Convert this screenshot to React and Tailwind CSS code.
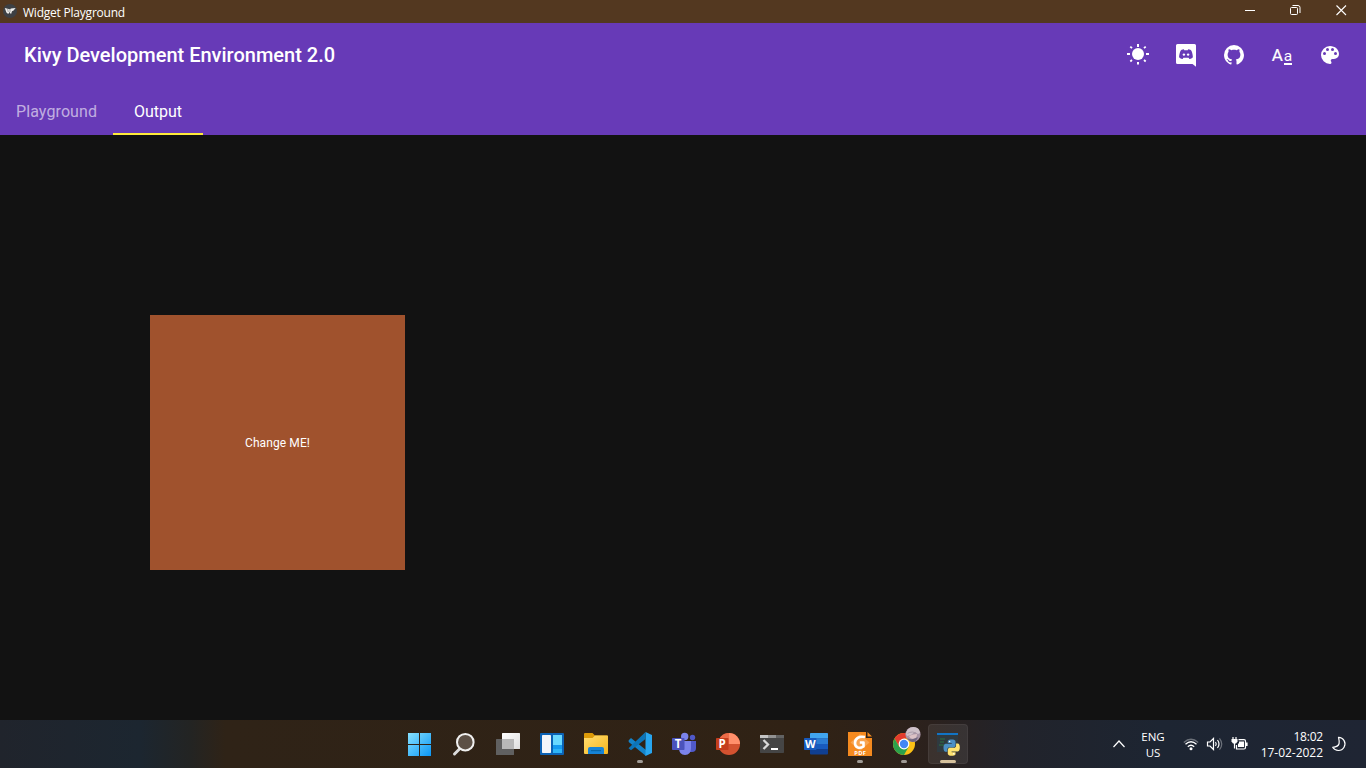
const UI = "font-['Open_Sans','Noto_Sans',sans-serif]";

function TitleBar() {
  return (
    <header className={`flex h-[23px] shrink-0 items-center bg-[#533820] pl-[3px] text-white ${UI}`}>
      <svg className="mb-[1px] h-[14px] w-[14px]" viewBox="0 0 14 14">
        <circle cx="7" cy="7" r="7" fill="#3d4044" />
        <path d="M1.8 4 4.6 4.8 7 5.2 8 4.6 12.6 4 10.6 6.6 9 7.2 8 10.2 6.6 8 5.2 10 3.4 8.6Z" fill="#f0efec" />
        <path d="M4.6 5 5.3 8M7 5.2 7 8" stroke="#77787a" strokeWidth=".6" />
      </svg>
      <span className="ml-[6px] pt-[2px] text-[12px] leading-[21px] tracking-[-0.22px]">Widget Playground</span>
      <div className="ml-auto flex h-full">
        <svg className="h-[23px] w-[46px]" viewBox="0 0 46 23"><path d="M18 10.5h10" stroke="#fff" /></svg>
        <svg className="h-[23px] w-[46px]" viewBox="0 0 46 23" fill="none" stroke="#fff">
          <rect x="17.5" y="7.5" width="7" height="7" rx="1" />
          <path d="M19.5 5.5h5.5a2 2 0 0 1 2 2v5.5" />
        </svg>
        <svg className="h-[23px] w-[47px]" viewBox="0 0 47 23"><path d="M17.5 5.500l9.500 9.500M27 5.500l-9.500 9.500" stroke="#fff" strokeWidth="1.100" /></svg>
      </div>
    </header>
  );
}

function SunIcon() {
  return (
    <svg className="h-6 w-6" viewBox="0 0 24 24" fill="#fff">
      <circle cx="12" cy="11" r="6" />
      <path d="M11 1h2v3h-2zM11 19h2v2.500h-2zM1 10h3v2H1zM20 10h3v2h-3z" />
      <path d="M4.300 3.700l1.700 1.500M19.700 3.700 18 5.200M4.300 18.500 6 17M19.700 18.500 18 17" stroke="#fff" strokeWidth="1.800" />
    </svg>
  );
}

function DiscordIcon() {
  return (
    <svg className="h-6 w-6" viewBox="0 0 24 24">
      <path d="M22 23.800 18.500 21H3.500A1.500 1.500 0 0 1 2 19.500V2.500A1.500 1.500 0 0 1 3.500 1h17A1.500 1.500 0 0 1 22 2.500Z" fill="#fff" />
      <path d="M9.800 6.300C8.200 6.300 6.800 7.400 6.800 7.400 5.200 10.300 5.100 14.200 5.100 14.200c1.300 1.700 3.500 1.800 3.500 1.800l.8-1.200H14.600l.8 1.200s2.200-.1 3.500-1.800c0 0-.1-3.900-1.700-6.800 0 0-1.400-1.100-3-1.100l-.5 1h-3.400Z" fill="#673ab7" />
      <circle cx="9.900" cy="11.600" r="1.200" fill="#fff" />
      <circle cx="14.100" cy="11.600" r="1.200" fill="#fff" />
    </svg>
  );
}

function GithubIcon() {
  return (
    <svg className="h-6 w-6" viewBox="0 0 24 24" fill="#fff">
      <path d="M12,2A10,10 0 0,0 2,12C2,16.42 4.87,20.17 8.84,21.5C9.34,21.58 9.5,21.27 9.5,21C9.5,20.77 9.5,20.14 9.5,19.31C6.73,19.91 6.14,17.97 6.14,17.97C5.68,16.81 5.03,16.5 5.03,16.5C4.12,15.88 5.1,15.9 5.1,15.9C6.1,15.97 6.63,16.93 6.63,16.93C7.5,18.45 8.97,18 9.54,17.76C9.63,17.11 9.89,16.67 10.17,16.42C7.95,16.17 5.62,15.31 5.62,11.5C5.62,10.39 6,9.5 6.65,8.79C6.55,8.54 6.2,7.5 6.75,6.15C6.75,6.15 7.59,5.88 9.5,7.17C10.29,6.95 11.15,6.84 12,6.84C12.85,6.84 13.71,6.95 14.5,7.17C16.41,5.88 17.25,6.15 17.25,6.15C17.8,7.5 17.45,8.54 17.35,8.79C18,9.5 18.38,10.39 18.38,11.5C18.38,15.32 16.04,16.16 13.81,16.41C14.17,16.72 14.5,17.33 14.5,18.26C14.5,19.6 14.5,20.68 14.5,21C14.5,21.27 14.66,21.59 15.17,21.5C19.14,20.16 22,16.42 22,12A10,10 0 0,0 12,2Z" />
    </svg>
  );
}

function FontIcon() {
  return (
    <svg className="h-6 w-6" viewBox="0 0 24 24" fill="#fff">
      <text x="1.700" y="18" fontFamily="Roboto, sans-serif" fontSize="17" fontWeight="400" stroke="#fff" strokeWidth=".2">A</text>
      <text x="13.700" y="18" fontFamily="Roboto, sans-serif" fontSize="15.500" fontWeight="400">a</text>
      <path d="M14 20h8v2h-8z" />
    </svg>
  );
}

function PaletteIcon() {
  return (
    <svg className="h-6 w-6" viewBox="0 0 24 24" fill="#fff">
      <path d="M17.5,12A1.5,1.5 0 0,1 16,10.5A1.5,1.5 0 0,1 17.5,9A1.5,1.5 0 0,1 19,10.5A1.5,1.5 0 0,1 17.5,12M14.5,8A1.5,1.5 0 0,1 13,6.5A1.5,1.5 0 0,1 14.5,5A1.5,1.5 0 0,1 16,6.5A1.5,1.5 0 0,1 14.5,8M9.5,8A1.5,1.5 0 0,1 8,6.5A1.5,1.5 0 0,1 9.5,5A1.5,1.5 0 0,1 11,6.5A1.5,1.5 0 0,1 9.5,8M6.5,12A1.5,1.5 0 0,1 5,10.5A1.5,1.5 0 0,1 6.5,9A1.5,1.5 0 0,1 8,10.5A1.5,1.5 0 0,1 6.5,12M12,3A9,9 0 0,0 3,12A9,9 0 0,0 12,21A1.5,1.5 0 0,0 13.5,19.5C13.5,19.11 13.35,18.76 13.11,18.5C12.88,18.23 12.73,17.88 12.73,17.5A1.5,1.5 0 0,1 14.23,16H16A5,5 0 0,0 21,11C21,6.58 16.97,3 12,3Z" />
    </svg>
  );
}

function AppBar() {
  return (
    <div className="h-[112px] shrink-0 bg-[#673ab7] font-['Roboto',sans-serif] text-white">
      <div className="flex h-16 items-center justify-between pl-6 pr-6">
        <h1 className="text-[20px] leading-6 font-medium">Kivy Development Environment 2.0</h1>
        <div className="flex gap-6">
          <SunIcon />
          <DiscordIcon />
          <GithubIcon />
          <FontIcon />
          <PaletteIcon />
        </div>
      </div>
      <nav className="flex h-12 text-[16px] leading-[49px]">
        <div className="w-[113px] pl-4 tracking-[0.1px] text-white/60">Playground</div>
        <div className="w-[90px] border-b-2 border-[#ffeb3b] text-center">Output</div>
      </nav>
    </div>
  );
}

const svg = "h-6 w-6 overflow-visible";

function Windows() {
  return (
    <svg className={svg} viewBox="0 0 24 24">
      <defs><linearGradient id="win" x1="0" y1="0" x2="24" y2="24" gradientUnits="userSpaceOnUse"><stop stopColor="#8ae3ff" /><stop offset="1" stopColor="#0895f5" /></linearGradient></defs>
      <path d="M0 1h11v11H0zM12 1h11v11H12zM0 13h11v11H0zM12 13h11v11H12z" fill="url(#win)" />
    </svg>
  );
}
function Search() {
  return (
    <svg className={svg} viewBox="0 0 24 24">
      <path d="M8 16.500 2.500 22" stroke="#dcdcdc" strokeWidth="3" strokeLinecap="round" />
      <circle cx="13.300" cy="10.200" r="8.300" fill="#5c5046" stroke="#f0f0f0" strokeWidth="2" />
    </svg>
  );
}
function TaskView() {
  return (
    <svg className={svg} viewBox="0 0 24 24">
      <defs><linearGradient id="tv" x1="0" y1="0" x2="1" y2="1"><stop stopColor="#fff" /><stop offset="1" stopColor="#dedede" /></linearGradient></defs>
      <rect y="7" width="18" height="16" rx=".5" fill="#606060" />
      <rect x="6" y="1" width="18" height="16" rx=".5" fill="url(#tv)" />
      <path d="M6 7h12v10H6z" fill="#b8b8b8" />
    </svg>
  );
}
function Widgets() {
  return (
    <svg className={svg} viewBox="0 0 24 24">
      <rect y="1" width="24" height="22" rx="1" fill="#0b62b5" />
      <rect x="2" y="3" width="9" height="18" rx=".7" fill="#f3f6fa" />
      <path d="M13 3h9v10h-9z" fill="#69d9ff" /><path d="M13 13h9v4h-9z" fill="#159bf0" /><path d="M13 17h9v4h-9z" fill="#2db4f8" />
    </svg>
  );
}
function Folder() {
  return (
    <svg className={svg} viewBox="0 0 24 24">
      <defs><linearGradient id="fold" x1="0" y1="0" x2="1" y2="1"><stop stopColor="#ffde72" /><stop offset="1" stopColor="#f6b51c" /></linearGradient></defs>
      <path d="M0 2q0-1 1-1h7.500L11 3.500h12q1 0 1 1V9H0z" fill="#dc9a08" />
      <path d="M0 6h8.500L11 3.500h12q1 0 1 1V21q0 1-1 1H1q-1 0-1-1z" fill="url(#fold)" />
      <path d="M4 22v-5q0-2 2-2h12q2 0 2 2v5z" fill="#1684d7" /><path d="M7 18h10v1.200H7z" fill="#0867aa" />
    </svg>
  );
}
function Code() {
  return (
    <svg className={svg} viewBox="0 0 24 24">
      <path d="M.7 8.200 3 6 18 18v6L.7 10z" fill="#1583c8" />
      <path d="M17.500 0 24 3v18l-6.500 3z" fill="#28a6ef" />
      <path d="M17.500 0v7L3 18.200.5 16.300z" fill="#0c74b8" />
    </svg>
  );
}

function Badge({ letter, size, fill }) {
  return (
    <>
      <rect y="6" width="12.500" height="12" rx=".8" fill={fill} />
      <text x="6.200" y="16.100" textAnchor="middle" fontFamily="Open Sans, sans-serif" fontWeight="700" fontSize={size} fill="#fff">{letter}</text>
    </>
  );
}

function Teams() {
  return (
    <svg className={svg} viewBox="0 0 24 24">
      <circle cx="20.500" cy="5.500" r="2.700" fill="#5059c9" /><circle cx="12.700" cy="4.500" r="3.700" fill="#7b83eb" />
      <path d="M16 9h8v7q0 4-4 4h-4z" fill="#5059c9" /><path d="M7 9h12v7q0 7-6 7t-6-7z" fill="#7b83eb" />
      <Badge letter="T" size="11.500" fill="#4b53bc" />
    </svg>
  );
}
function PowerPoint() {
  return (
    <svg className={svg} viewBox="0 0 24 24">
      <circle cx="13" cy="12" r="11" fill="#d35230" /><path d="M13 1A11 11 0 0 0 2 12h11z" fill="#ed6c47" /><path d="M13 1a11 11 0 0 1 11 11H13z" fill="#ff8f6b" />
      <Badge letter="P" size="11.500" fill="#c43e1c" />
    </svg>
  );
}
function Terminal() {
  return (
    <svg className={svg} viewBox="0 0 24 24">
      <rect y="3" width="24" height="18" rx=".7" fill="#454545" /><path d="M0 3h8v3H0z" fill="#c4c4c4" /><path d="M8 3h8v3H8z" fill="#929292" /><path d="M16 3h8v3h-8z" fill="#626262" />
      <path d="m3.500 8 4.500 4.500L3.500 17" fill="none" stroke="#d8d8d8" strokeWidth="2.300" /><path d="M11 16h7v2h-7z" fill="#fff" />
    </svg>
  );
}
function Word() {
  return (
    <svg className={svg} viewBox="0 0 24 24">
      <rect x="6" y="1" width="18" height="21.500" rx="1" fill="#103f91" /><path d="M6 2q0-1 1-1h16q1 0 1 1v4.500H6z" fill="#41a5ee" /><path d="M6 6.500h18V12H6z" fill="#2b7cd3" /><path d="M6 12h18v5H6z" fill="#185abd" />
      <Badge letter="W" size="11" fill="#185abd" />
    </svg>
  );
}
function Pdf() {
  return (
    <svg className={svg} viewBox="0 0 24 24">
      <path d="M0 0h18v6h6v18H0z" fill="#f58a1f" /><path d="m19.500 0 4.500 4.500h-4.500z" fill="#f58a1f" />
      <path d="m12 2 9.500 8.500L12 19l-9.500-8.500z" fill="#f9a550" />
      <path d="M17 5C11 3.800 7 6.500 7 11c0 5.200 4.800 5.800 8.500 3.500V10.500h-3.700" fill="none" stroke="#fff" strokeWidth="2.600" strokeLinejoin="round" />
      <text x="12.200" y="22.600" textAnchor="middle" fontFamily="Open Sans, sans-serif" fontWeight="700" fontSize="5.800" letterSpacing=".3" fill="#fff">PDF</text>
    </svg>
  );
}
function Chrome() {
  return (
    <svg className={svg} viewBox="0 0 24 24">
      <circle cx="12" cy="12" r="11" fill="#fbc116" />
      <path d="M2.500 6.500A11 11 0 0 1 21.500 6.500H12L7.200 14.700z" fill="#e33b2e" />
      <path d="M2.500 6.500A11 11 0 0 0 12 23l4.700-8.300H7.200z" fill="#2ba24c" />
      <circle cx="12" cy="12" r="5.400" fill="#fff" /><circle cx="12" cy="12" r="4.200" fill="#4387f4" />
      <circle cx="21" cy="2.500" r="7.600" fill="#a995a6" />
      <path d="M14 2q1-7 7.500-7 6 0 6.500 6l-2 1-3-2-4 3-4 1z" fill="#cfc1c9" />
      <path d="M17 4q4-2 8-2 0 4-3 5-4 0-5-3z" fill="#dcc2c6" />
      <path d="M15 6q3 1.500 5 1.200L24 6l2-1q-1.500 5-5.500 5-3.500-.5-5.500-4z" fill="#70667f" />
      <path d="M15.500 1.500q2-1.500 5-1.500l3 .8" fill="none" stroke="#aa9caa" />
    </svg>
  );
}
function Python() {
  return (
    <svg className={svg} viewBox="0 0 24 24">
      <rect x="1" y="1" width="21" height="19" fill="#2f3a40" /><path d="M1 1h21v2H1z" fill="#1174c5" />
      <path d="M4 7h5M4 10h4M3 13h5" stroke="#2c6042" strokeWidth="1.300" />
      <g transform="translate(7.500 7.500) scale(.68)">
        <path d="M11.900 0C6 0 6.300 2.600 6.300 2.600v2.700h5.800v.9H4S0 5.700 0 12s3.400 6 3.400 6h2.100v-3s-.1-3.400 3.300-3.400h5.700s3.200 0 3.200-3.100V3.200S18.200 0 11.900 0z" fill="#4b8fc4" />
        <path d="M12.100 24c5.900 0 5.600-2.600 5.600-2.600v-2.700h-5.800v-.9H20s4 .5 4-5.900-3.400-6-3.400-6h-2.100v3s.1 3.400-3.300 3.400H9.500s-3.200 0-3.200 3.100v5.300S5.800 24 12.100 24z" fill="#ffe36f" />
        <circle cx="8.900" cy="3" r="1.100" fill="#fff" /><circle cx="15.100" cy="21" r="1.100" fill="#fff" />
      </g>
    </svg>
  );
}

const apps = [
  { name: "windows", Icon: Windows }, { name: "search", Icon: Search }, { name: "tasks", Icon: TaskView },
  { name: "widgets", Icon: Widgets }, { name: "files", Icon: Folder }, { name: "code", Icon: Code, open: true },
  { name: "teams", Icon: Teams }, { name: "powerpoint", Icon: PowerPoint }, { name: "terminal", Icon: Terminal },
  { name: "word", Icon: Word }, { name: "pdf", Icon: Pdf, open: true }, { name: "chrome", Icon: Chrome, open: true },
  { name: "python", Icon: Python, active: true },
];

function Taskbar() {
  return (
    <footer className={`flex h-12 shrink-0 justify-between bg-[linear-gradient(90deg,#20242c_0px,#1c2630_140px,#232423_190px,#2f2317_225px,#302215_820px,#2b211d_930px,#21232b_1020px,#1d2532_1160px,#1f2533_1366px)] pl-[400px] text-white ${UI}`}>
      <div className="flex items-center gap-1">
        {apps.map(({ name, Icon, open, active }) => (
          <div key={name} className={`relative flex h-10 w-10 items-center justify-center rounded ${active ? "border border-white/5 bg-white/8" : ""}`}>
            <Icon />
            {open && <i className="absolute bottom-[1px] left-[17px] h-[3px] w-[6px] rounded-full bg-[#a09b96]" />}
            {active && <i className="absolute bottom-0 left-[11px] h-[3px] w-4 rounded-full bg-[#d8c39e]" />}
          </div>
        ))}
      </div>
      <div className="flex items-center text-[12px] leading-4">
        <svg className="h-4 w-4" viewBox="0 0 16 16"><path d="m2.500 11 5.500-6 5.500 6" fill="none" stroke="#fff" strokeWidth="1.200" /></svg>
        <div className="ml-[10px] w-[32px] pt-[2px] text-center text-[11.5px] leading-[16px]">ENG<br />US</div>
        <svg className="ml-[14px] h-4 w-4" viewBox="0 0 16 16" fill="none" stroke="#fff" strokeWidth="1.300">
          <path d="M.8 6.500q7.200-6.500 14.400 0" opacity=".35" /><path d="M2.500 8.300q5.500-5 11 0M4.800 10.700q3.200-3 6.400 0" /><circle cx="8" cy="12.700" r="1.500" fill="#fff" stroke="none" />
        </svg>
        <svg className="ml-[7px] h-4 w-[18px]" viewBox="0 0 18 16" fill="none" stroke="#fff" strokeWidth="1.200">
          <path d="M1.500 6h2.500l3.500-3.500v11L4 10H1.500zM9.500 6q1.500 2 0 4M11.500 4q3 4 0 8" /><path d="M13.500 2.300q4.500 5.700 0 11.400" opacity=".35" />
        </svg>
        <svg className="ml-[7px] h-4 w-[17px]" viewBox="0 0 17 16" fill="none" stroke="#fff" strokeWidth="1.200">
          <path d="M2 1v3m3-3v3M3.500 6v6.500" /><path d="M.5 3h6v2.500L5 7.500H2L.5 5.500z" fill="#fff" stroke="none" /><path d="M7.500 3.600h5.500q1.500 0 1.500 1.500v6.400q0 1.500-1.500 1.500H5.500V9" /><path d="M8 5.500h5V11H7V8l1-1z" fill="#fff" stroke="none" /><path d="M15.800 6.500v3.500" strokeWidth="1.600" />
        </svg>
        <div className="ml-[11px] w-[64px] pt-[1px] text-right text-[12px] whitespace-nowrap"><div className="tracking-[-0.2px]">18:02</div><div className="flex justify-end tracking-[-0.03px]">17-02-2022</div></div>
        <svg className="ml-[8px] mr-[19px] h-4 w-4" viewBox="0 0 16 16"><path d="M7.500 1.300a6.600 6.600 0 1 1-5.800 10c3-.3 5.800-1.300 6.400-3.800.5-2-.2-4.500-.6-6.200z" fill="none" stroke="#fff" strokeWidth="1.200" strokeLinejoin="round" /></svg>
      </div>
    </footer>
  );
}

export default function App() {
  return (
    <div className="flex h-screen w-full flex-col overflow-hidden bg-[#121212]">
      <TitleBar />
      <AppBar />
      <main className="min-h-0 flex-1 pt-[180px] pl-[150px]">
        <div className="flex h-[255px] w-[255px] items-center justify-center bg-[#a0522d] font-['Roboto',sans-serif] text-[12px] leading-4 tracking-[0.1px] text-white">Change ME!</div>
      </main>
      <Taskbar />
    </div>
  );
}
